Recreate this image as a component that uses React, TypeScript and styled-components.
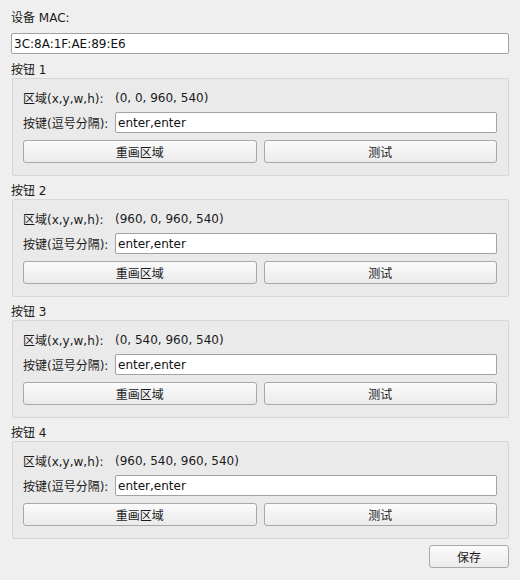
import { createGlobalStyle } from 'styled-components';
import styled from 'styled-components';

const GlobalStyle = createGlobalStyle`
  html, body {
    margin: 0;
    padding: 0;
    background: #efefef;
  }
  body {
    font-family: 'DejaVu Sans', 'Noto Sans CJK SC', sans-serif;
    font-size: 12px;
    color: #1a1a1a;
  }
`;

const regions = [
  '(0, 0, 960, 540)',
  '(960, 0, 960, 540)',
  '(0, 540, 960, 540)',
  '(960, 540, 960, 540)',
];

export default function App() {
  return (
    <>
      <GlobalStyle />
      <Window>
        <Label>设备 MAC:</Label>
        <MacInput defaultValue="3C:8A:1F:AE:89:E6" />

        {regions.map((region, i) => (
          <Section key={i}>
            <Label>按钮 {i + 1}</Label>
            <GroupBox>
              <Row>
                <RowLabel>区域(x,y,w,h):</RowLabel>
                <Value>{region}</Value>
              </Row>
              <Row>
                <RowLabel>按键(逗号分隔):</RowLabel>
                <KeyInput defaultValue="enter,enter" />
              </Row>
              <Buttons>
                <PushButton>重画区域</PushButton>
                <PushButton>测试</PushButton>
              </Buttons>
            </GroupBox>
          </Section>
        ))}

        <Footer>
          <SaveButton>保存</SaveButton>
        </Footer>
      </Window>
    </>
  );
}

const Window = styled.div`
  width: 520px;
  box-sizing: border-box;
  padding: 10px 11px 12px 11px;
  display: flex;
  flex-direction: column;
`;

const Label = styled.div`
  height: 16px;
  line-height: 16px;
  white-space: nowrap;
`;

const TextInput = styled.input`
  box-sizing: border-box;
  height: 21px;
  border: 1px solid #a2a2a2;
  border-radius: 2px;
  background: #fff;
  padding: 0 2px;
  font: inherit;
  color: #111;
  outline: none;
`;

const MacInput = styled(TextInput)`
  margin-top: 7px;
  width: 498px;
`;

const Section = styled.div`
  display: flex;
  flex-direction: column;
  margin-top: 8px;

  & + & {
    margin-top: 7px;
  }
`;

const GroupBox = styled.div`
  margin-left: 1px;
  width: 497px;
  box-sizing: border-box;
  border: 1px solid #d6d6d6;
  border-radius: 2px;
  background: #eaeaea;
  padding: 8px 11px 12px 10px;
  display: flex;
  flex-direction: column;
  gap: 4px;
`;

const Row = styled.div`
  display: flex;
  align-items: center;
  height: 21px;
`;

const RowLabel = styled.span`
  width: 92px;
  flex: none;
  white-space: nowrap;
`;

const Value = styled.span`
  white-space: nowrap;
`;

const KeyInput = styled(TextInput)`
  flex: 1;
  min-width: 0;
`;

const Buttons = styled.div`
  margin-top: 3px;
  display: grid;
  grid-template-columns: 1fr 1fr;
  gap: 7px;
`;

const PushButton = styled.button`
  box-sizing: border-box;
  height: 23px;
  border: 1px solid #a8a8a8;
  border-radius: 3px;
  background: linear-gradient(#fbfbfb, #ebebeb);
  font: inherit;
  color: #1a1a1a;
  padding: 0;
`;

const Footer = styled.div`
  display: flex;
  justify-content: flex-end;
  margin-top: 6px;
`;

const SaveButton = styled(PushButton)`
  width: 80px;
`;
